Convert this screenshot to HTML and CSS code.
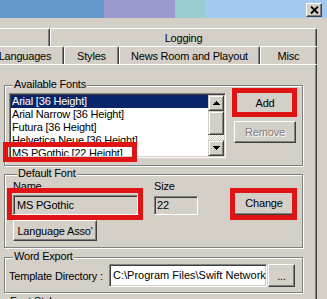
FILE: index.html
```html
<!DOCTYPE html>
<html>
    <head>
        <meta charset="UTF-8">
        <link rel="stylesheet" href="styles.css">
    </head>
    <body>
        <div class="titlebar">
            <span class="seg segBlue"></span>
            <span class="seg segPurple"></span>
            <span class="seg segTeal"></span>
            <span class="seg segSky">
                <span class="closeBtn">
                    <svg width="9" height="8" viewBox="0 0 9 8"><path d="M1 0.5L8 7.5M8 0.5L1 7.5" stroke="#000" stroke-width="1.8" fill="none"/></svg>
                </span>
            </span>
        </div>

        <div class="window">
            <div class="main">
                <div class="tabRow">
                    <div class="tab tabBack"></div>
                    <div class="tab tabLogging">Logging</div>
                </div>
                <div class="tabRow">
                    <div class="tab tabLang">Languages</div>
                    <div class="tab tabStyles">Styles</div>
                    <div class="tab tabNews">News Room and Playout</div>
                    <div class="tab tabMisc">Misc</div>
                </div>

                <div class="panel">
                    <div class="group groupFonts">
                        <div class="groupTitle">Available Fonts</div>
                        <div class="fontsRow">
                            <div class="listbox">
                                <ul class="listItems">
                                    <li class="selected">Arial [36 Height]</li>
                                    <li>Arial Narrow [36 Height]</li>
                                    <li>Futura [36 Height]</li>
                                    <li>Helvetica Neue [36 Height]</li>
                                    <li>MS PGothic [22 Height]</li>
                                </ul>
                                <div class="scrollbar">
                                    <div class="sbBtn">
                                        <svg width="7" height="4" viewBox="0 0 7 4"><path d="M3 0h1v1h1v1h1v1h1v1H0V3h1V2h1V1h1z"/></svg>
                                    </div>
                                    <div class="sbThumb"></div>
                                    <div class="sbTrack"></div>
                                    <div class="sbBtn">
                                        <svg width="7" height="4" viewBox="0 0 7 4"><path d="M0 0h7v1H6v1H5v1H4v1H3V3H2V2H1V1H0z"/></svg>
                                    </div>
                                </div>
                            </div>
                            <div class="btnCol">
                                <button class="btn">Add</button>
                                <button class="btn" disabled>Remove</button>
                            </div>
                        </div>
                    </div>

                    <div class="group groupDefault">
                        <div class="groupTitle">Default Font</div>
                        <div class="defaultRow">
                            <div class="nameCol">
                                <div class="fieldLabel">Name</div>
                                <div class="field fieldName">MS PGothic</div>
                                <button class="btn btnLang">Language Asso'</button>
                            </div>
                            <div class="sizeCol">
                                <div class="fieldLabel">Size</div>
                                <div class="field fieldSize">22</div>
                            </div>
                            <div class="changeCol">
                                <button class="btn btnChange">Change</button>
                            </div>
                        </div>
                    </div>

                    <div class="group groupWord">
                        <div class="groupTitle">Word Export</div>
                        <div class="wordRow">
                            <span class="wordLabel">Template Directory :</span>
                            <div class="field fieldPath">C:\Program Files\Swift Network</div>
                            <button class="btn btnBrowse">...</button>
                        </div>
                    </div>

                    <div class="group groupStyles">
                        <div class="groupTitle">Font Styles</div>
                    </div>
                </div>
            </div>
            <div class="frame"></div>
        </div>

        <div class="mark markList"></div>
        <div class="mark markAdd"></div>
        <div class="mark markName"></div>
        <div class="mark markChange"></div>
    </body>
</html>
```

FILE: styles.css
```css
body {
    margin: 0;
    width: 327px;
    height: 299px;
    overflow: hidden;
    position: relative;
    background: #d4d0c8;
    font-family: "Liberation Sans", Arial, sans-serif;
    font-size: 11px;
    letter-spacing: -0.2px;
    color: #000000;
}

/* title bar */
.titlebar {
    display: flex;
    height: 18px;
}

.segBlue { width: 104px; background: #6599cc; }
.segPurple { width: 71px; background: #9c99cc; }
.segTeal { width: 30px; background: #99cccc; }

.segSky {
    flex: 1;
    background: #a5c9ee;
    display: flex;
    justify-content: flex-end;
    align-items: flex-start;
    padding: 3px 5px 0 0;
}

.closeBtn {
    width: 16px;
    height: 14px;
    box-sizing: border-box;
    background: #d4d0c8;
    border: 1px solid;
    border-color: #ffffff #404040 #404040 #ffffff;
    box-shadow: inset -1px -1px #808080;
    display: flex;
    align-items: center;
    justify-content: center;
}

/* window */
.window {
    display: flex;
    margin-top: 10px;
    height: 271px;
}

.main {
    width: 317px;
    flex: none;
}

.frame {
    flex: 1;
}

/* tabs */
.tabRow {
    display: flex;
    height: 18px;
}

.tab {
    flex: none;
    box-sizing: border-box;
    height: 18px;
    padding-top: 1px;
    line-height: 16px;
    text-align: center;
    white-space: nowrap;
    border-top: 1px solid #ffffff;
    border-left: 1px solid #ffffff;
    border-right: 1px solid #404040;
    border-radius: 2px 2px 0 0;
    box-shadow: inset -1px 0 #808080;
}

.tabBack { width: 60px; margin-left: -10px; }
.tabLogging { width: 267px; }
.tabLang { width: 78px; margin-left: -14px; }
.tabStyles { width: 55px; }
.tabNews { width: 141px; }
.tabMisc { width: 57px; }

.panel {
    box-sizing: border-box;
    height: 235px;
    overflow: hidden;
    padding: 20px 0 0 4px;
    border-top: 1px solid #ffffff;
    border-right: 1px solid #404040;
    box-shadow: inset -1px 0 #808080;
}

/* group boxes */
.group {
    box-sizing: border-box;
    width: 299px;
    border: 1px solid #808080;
    box-shadow: inset 1px 1px #ffffff, 1px 1px #ffffff;
}

.groupTitle {
    display: table;
    margin: -8px 0 0 4px;
    padding: 0 1px;
    line-height: 13px;
    background: #d4d0c8;
}

.groupFonts { padding: 0 0 7px 4px; }
.groupDefault { margin-top: 8px; padding: 0 0 6px 8px; }
.groupWord { margin-top: 9px; padding: 0 0 5px 4px; }
.groupStyles { margin-top: 9px; height: 30px; }

/* list */
.fontsRow {
    display: flex;
    margin-top: 2px;
}

.listbox {
    display: flex;
    box-sizing: border-box;
    width: 217px;
    height: 65px;
    background: #ffffff;
    border: 1px solid;
    border-color: #808080 #ffffff #ffffff #808080;
    box-shadow: inset 1px 1px #404040, inset -1px -1px #d4d0c8;
    padding: 1px;
}

.listItems {
    flex: 1;
    margin: 0;
    padding: 0;
    list-style: none;
    overflow: hidden;
}

.listItems li {
    height: 13px;
    line-height: 13px;
    padding-left: 1px;
    white-space: nowrap;
}

.listItems .selected {
    background: #0a246a;
    color: #ffffff;
}

.scrollbar {
    width: 16px;
    display: flex;
    flex-direction: column;
}

.sbBtn,
.sbThumb {
    box-sizing: border-box;
    background: #d4d0c8;
    border: 1px solid;
    border-color: #d4d0c8 #404040 #404040 #d4d0c8;
    box-shadow: inset 1px 1px #ffffff, inset -1px -1px #808080;
}

.sbBtn {
    height: 16px;
    display: flex;
    align-items: center;
    justify-content: center;
}

.sbThumb { height: 24px; }

.sbTrack {
    flex: 1;
    background: repeating-conic-gradient(#ffffff 0 25%, #d4d0c8 0 50%) 0 0 / 2px 2px;
}

/* buttons */
.btnCol {
    display: flex;
    flex-direction: column;
    gap: 7px;
    margin: -2px 0 0 8px;
}

.btn {
    appearance: none;
    box-sizing: border-box;
    width: 62px;
    height: 23px;
    padding: 0;
    font: inherit;
    letter-spacing: inherit;
    color: #000000;
    background: #d4d0c8;
    border: 1px solid;
    border-color: #ffffff #404040 #404040 #ffffff;
    box-shadow: inset -1px -1px #808080;
    white-space: nowrap;
}

.btn:disabled {
    height: 22px;
    color: #808080;
    text-shadow: 1px 1px #ffffff;
}

/* default font */
.defaultRow {
    display: flex;
}

.fieldLabel {
    line-height: 13px;
}

.field {
    box-sizing: border-box;
    line-height: 13px;
    padding: 0 0 0 2px;
    white-space: nowrap;
    overflow: hidden;
    border: 1px solid;
    border-color: #808080 #ffffff #ffffff #808080;
    box-shadow: inset 1px 1px #404040, inset -1px -1px #d4d0c8;
    display: flex;
    align-items: center;
}

.nameCol { width: 125px; }

.fieldName {
    margin-top: 2px;
    height: 20px;
    padding-left: 3px;
}

.btnLang {
    margin-top: 5px;
    width: 84px;
    height: 21px;
}

.sizeCol {
    width: 44px;
    margin-left: 16px;
}

.fieldSize {
    margin-top: 3px;
    height: 19px;
    padding-left: 2px;
}

.changeCol {
    margin-left: 35px;
}

.btnChange {
    margin-top: 11px;
    height: 24px;
}

/* word export */
.wordRow {
    display: flex;
    align-items: center;
    margin-top: 1px;
    height: 23px;
}

.wordLabel {
    width: 100px;
    white-space: nowrap;
}

.fieldPath {
    width: 158px;
    height: 23px;
    background: #ffffff;
    padding-left: 3px;
    letter-spacing: 0;
}

.btnBrowse {
    width: 27px;
    margin-left: 1px;
}

/* red annotation boxes */
.mark {
    position: absolute;
    box-sizing: border-box;
    border: 5px solid #e01414;
}

.markList { left: 3px; top: 142px; width: 134px; height: 20px; }
.markAdd { left: 232px; top: 88px; width: 65px; height: 29px; }
.markName { left: 7px; top: 188px; width: 136px; height: 32px; }
.markChange { left: 230px; top: 188px; width: 67px; height: 32px; }
```
